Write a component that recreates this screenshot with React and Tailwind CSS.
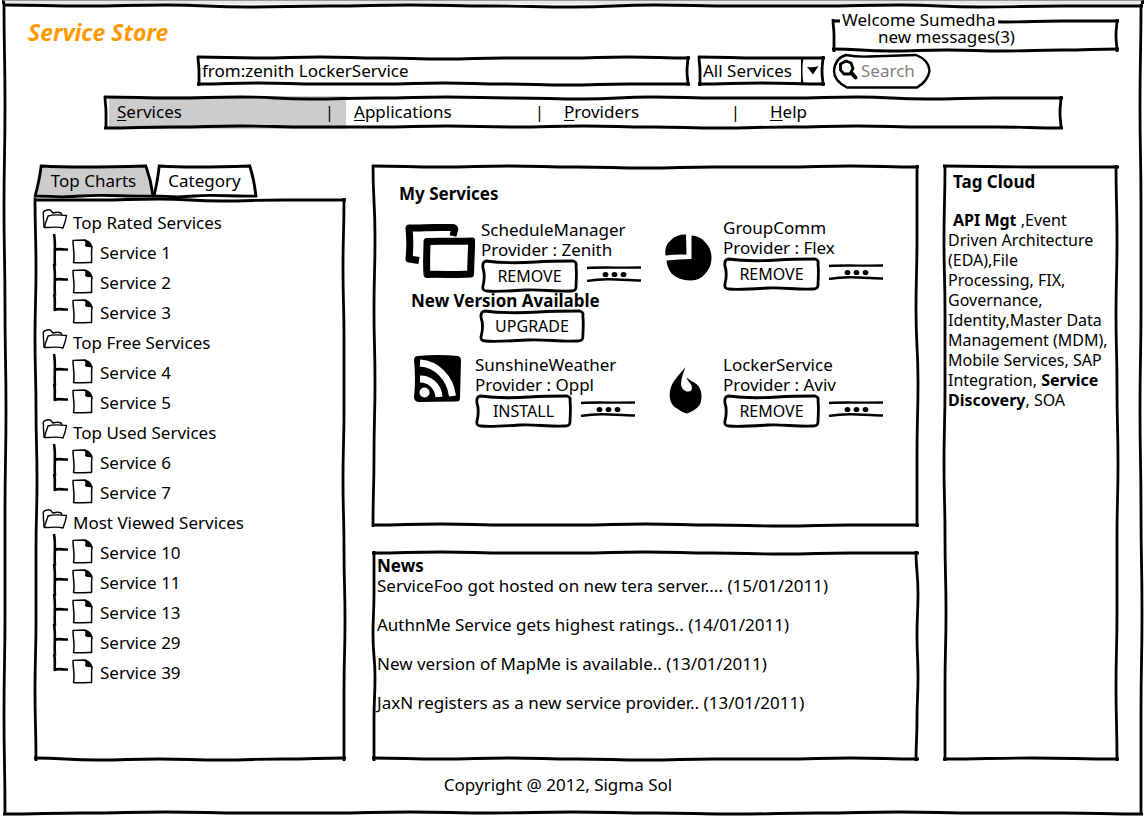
import React from 'react';

/* Offsets, in pixels, of a hand-drawn stroke from its straight line. */
const WAVES = {
  a: [0, 1, 0, 1, 2, 1, 1, 0, 1],
  b: [1, 0, 1, 1, 0, 1, 2, 1, 1],
  c: [0, 2, 1, 2, 1, 0],
  d: [1, 1, 0, 2, 1, 1],
  e: [0, 1, 1],
  f: [1, 0, 1],
  long1: [0, 1, 0, 2, 1, 0, 1, 2, 0, 1, 1, 0, 2, 1, 1],
  long2: [2, 1, 0, 1, 1, 0, 1, 0, 1, 2, 1, 0, 1, 1, 2],
};

function wavePath(wave, vertical) {
  const step = 100 / (wave.length - 1);
  const at = (along, off) => (vertical ? `${off + 1} ${along}` : `${along} ${off + 1}`);
  let d = `M${at(0, wave[0])}`;
  for (let i = 1; i < wave.length; i += 1) {
    const mid = (i - 0.5) * step;
    d += `C${at(mid, wave[i - 1])} ${at(mid, wave[i])} ${at(i * step, wave[i])}`;
  }
  return d;
}

function Edge({ wave, vertical, className }) {
  return (
    <svg
      aria-hidden="true"
      className={`pointer-events-none absolute overflow-visible ${className}`}
      viewBox={vertical ? '0 0 4 100' : '0 0 100 4'}
      preserveAspectRatio="none"
      fill="none"
      stroke="#000"
      strokeWidth="2.800"
    >
      <path d={wavePath(WAVES[wave], vertical)} vectorEffect="non-scaling-stroke" />
    </svg>
  );
}

function Sketch({ top = 'a', right = 'c', bottom = 'b', left = 'd' }) {
  return (
    <>
      <Edge wave={top} className="left-0 top-0 h-1 w-full" />
      <Edge wave={bottom} className="bottom-0 left-0 h-1 w-full" />
      <Edge wave={left} vertical className="left-0 top-0 h-full w-1" />
      <Edge wave={right} vertical className="right-0 top-0 h-full w-1" />
    </>
  );
}

function SketchButton({ children, className }) {
  return (
    <button type="button" className={`relative h-8 cursor-pointer text-base leading-none ${className}`}>
      <svg
        aria-hidden="true"
        className="absolute inset-0 h-full w-full overflow-visible"
        viewBox="0 0 98 32"
        preserveAspectRatio="none"
        fill="none"
        stroke="#000"
        strokeWidth="2.800"
        strokeLinejoin="round"
      >
        <path
          vectorEffect="non-scaling-stroke"
          d="M5 1C20 3 40 3 55 2S85 1 93 1Q97 2 96 6C97 14 96 21 96 27Q96 31 91 31C75 32 60 29 45 30S15 32 6 31Q1 31 2 26C4 18 4 14 2 8Q1 2 5 1Z"
        />
      </svg>
      <span className="relative">{children}</span>
    </button>
  );
}

function MoreButton() {
  return (
    <button type="button" aria-label="More" className="mt-1.5 h-4 w-14 shrink-0 cursor-pointer">
      <svg aria-hidden="true" viewBox="0 0 56 16" className="h-4 w-14" fill="none" stroke="#000" strokeWidth="2.400">
        <path d="M1 2C15 1 35 2 55 1.500M1 15C12 13 20 13 30 13.500S48 14 55 14.500" />
        <g fill="#000" stroke="none">
          <ellipse cx="19.500" cy="8.500" rx="2.900" ry="2.600" />
          <ellipse cx="28.500" cy="8.500" rx="2.900" ry="2.600" />
          <ellipse cx="37.500" cy="8.500" rx="2.900" ry="2.600" />
        </g>
      </svg>
    </button>
  );
}

function ScreensIcon() {
  return (
    <svg aria-hidden="true" viewBox="0 0 70 54" className="h-[54px] w-[70px]" fill="none" stroke="#000" strokeWidth="7" strokeLinejoin="round">
      <path d="M48 12L49.500 6Q50.500 3 46 3.600C32 3 18 4 4 4C5 14 5 26 4 35L14 36.500" />
      <path d="M22 17.500C36 16.500 52 18 67 17C66 28 66 40 65.500 50C50 51 36 50 22 50.500C21 40 22 28 22 17.500Z" />
    </svg>
  );
}

function FeedIcon() {
  return (
    <svg aria-hidden="true" viewBox="0 0 47 47" className="h-[47px] w-[47px]">
      <path d="M4 1Q24 -1 44 1Q47 2 47 5L46 43Q46 47 42 46.500L4 47Q0 46 0 42Q2 24 0 5Q0 1 4 1Z" />
      <path d="M6 8C22 9 36 22 38.500 41M6 24C15 24 24 30 25 42" fill="none" stroke="#fff" strokeWidth="7" />
      <circle cx="10.500" cy="37.500" r="5" fill="#fff" />
    </svg>
  );
}

function PieIcon() {
  return (
    <svg aria-hidden="true" viewBox="0 0 47 47" className="h-[47px] w-[47px]">
      <path d="M21 .5L21.500 20.500Q10 20 .5 21.500Q-1 12 6 6Q12 0 21 .5Z" />
      <path d="M26.500 1.500Q35 2 40 8Q47 15 46.500 25Q46 34 40 40Q34 47 25 46.500Q14 46 7 40Q2 34 1.500 26.500Q14 25 26.500 25Z" />
    </svg>
  );
}

function FlameIcon() {
  return (
    <svg aria-hidden="true" viewBox="0 0 33 47" className="h-[47px] w-[33px]">
      <path d="M16.500 0C12 6 5 12 2 20C-1 29 1 38 8 41.500C12 44 14 46 18 46.500C25 44 31 40 32 34C34 24 30 18 25 15.500C22 14 20 12 17.500 10.500C19 15 23 17 23 21C23 25 18 25.500 15 23C10 19 12 12 16.500 0Z" />
    </svg>
  );
}

function FolderIcon() {
  return (
    <svg aria-hidden="true" viewBox="0 0 26 20" className="h-5 w-[26px]" fill="none" stroke="#000" strokeWidth="1.400" strokeLinejoin="round">
      <path d="M2 18.500C2 13 1 9 1.500 6Q0 2 5 1Q9 0 10 3L11 4C14 3 17 3 19 4Q20 5 19.500 6" />
      <path d="M6 7C12 5 19 6 24.500 6.500C24 10 23 14 21 19C14 17 8 19 2.500 18.500C3 14 5 11 6 7Z" fill="#fff" />
    </svg>
  );
}

function FileIcon() {
  return (
    <svg aria-hidden="true" viewBox="0 0 21 25" className="h-[25px] w-[21px]" fill="none" stroke="#000" strokeWidth="1.500" strokeLinejoin="round">
      <path d="M1 1.500C5 1 9 1 13 1C16 2 19 5 20 8C19 13 20 18 19.500 23.500C13 23 7 24.500 1.500 23.500C3 16 1 9 1 1.500Z" />
      <path d="M12.500 1C16 2 18.500 5 19.500 8L13.500 7Q15 4 12.500 1Z" fill="#000" strokeWidth="1" />
    </svg>
  );
}

function Branch({ last }) {
  return (
    <svg aria-hidden="true" viewBox="0 0 16 30" className="h-[30px] w-4 overflow-visible" fill="none" stroke="#000" strokeWidth="2.600">
      <path d={last ? 'M0 -4C2 2 0 7 1 13' : 'M0 -4C2 6 0 18 1 28'} />
      <path d="M0 12C5 10 9 12 14 11.500" />
    </svg>
  );
}

const TREE = [
  ['Top Rated Services', ['Service 1', 'Service 2', 'Service 3']],
  ['Top Free Services', ['Service 4', 'Service 5']],
  ['Top Used Services', ['Service 6', 'Service 7']],
  ['Most Viewed Services', ['Service 10', 'Service 11', 'Service 13', 'Service 29', 'Service 39']],
];

function ServiceTree() {
  return (
    <ul className="pl-2 pt-2.5">
      {TREE.map(([group, items]) => (
        <li key={group}>
          <div className="flex h-[30px] items-center gap-[5px]">
            <span className="-mt-2"><FolderIcon /></span>
            {group}
          </div>
          <ul className="pl-3">
            {items.map((item, i) => (
              <li key={item} className="flex h-[30px] items-center">
                <Branch last={i === items.length - 1} />
                <span className="-mt-1 ml-0.5 mr-[7px]"><FileIcon /></span>
                {item}
              </li>
            ))}
          </ul>
        </li>
      ))}
    </ul>
  );
}

function Tab({ children, selected, className }) {
  return (
    <button type="button" role="tab" aria-selected={selected} className={`relative h-8 cursor-pointer ${className}`}>
      <svg aria-hidden="true" className="absolute inset-0 h-full w-full overflow-visible" viewBox="0 0 100 32" preserveAspectRatio="none" stroke="#000" strokeWidth="2.800" fill={selected ? '#ccc' : '#fff'}>
        <path vectorEffect="non-scaling-stroke" d="M1 31C3 22 5 12 6 1C35 3 65 2 94 1C97 11 99 21 100 31C80 32 60 29 40 31S15 31 1 31Z" />
      </svg>
      <span className="relative">{children}</span>
    </button>
  );
}

function Service({ icon, name, provider, action, className, iconClass }) {
  return (
    <article className={`flex items-start ${className}`}>
      <div className={`shrink-0 ${iconClass}`}>{icon}</div>
      <div>
        <h3 className="leading-5">{name}</h3>
        <p className="leading-5">Provider : {provider}</p>
        <div className="flex items-start gap-2">
          <SketchButton className="w-[97px]">{action}</SketchButton>
          <MoreButton />
        </div>
      </div>
    </article>
  );
}

const MENU = [
  ['S', 'ervices', 'w-[237px] pr-3 bg-[#ccc]'],
  ['A', 'pplications', 'w-[210px] pr-3'],
  ['P', 'roviders', 'w-[206px] pr-[22px]'],
  ['H', 'elp', 'flex-1'],
];

const NEWS = [
  'ServiceFoo got hosted on new tera server.... (15/01/2011)',
  'AuthnMe Service gets highest ratings.. (14/01/2011)',
  'New version of MapMe is available.. (13/01/2011)',
  'JaxN registers as a new service provider.. (13/01/2011)',
];

export default function App() {
  return (
    <div className="flex min-h-screen flex-col bg-white pb-0.5 font-['Noto_Sans','Open_Sans',sans-serif] text-[17px] text-black">
      <div className="mx-0.5 h-1 border-x-[3px] border-t border-x-black border-t-[#999] bg-[#ece8e3]" />
      <div className="relative mx-[3px] flex flex-1 flex-col">
        <Sketch top="long1" bottom="long2" left="a" right="b" />

        <header>
          <div className="flex items-start justify-between pl-[25px] pr-6 pt-1.5">
            <h1 className="pt-1.5 text-[23px] font-bold italic leading-8 text-[#ff9900]">Service Store</h1>
            <fieldset className="relative h-[42px] w-[287px]">
              <div className="absolute inset-x-0 -top-[11px] bottom-0">
                <Sketch top="d" bottom="c" left="e" right="f" />
              </div>
              <legend className="relative z-10 ml-2 bg-white px-0.5 leading-5">Welcome Sumedha</legend>
              <a href="#messages" className="relative block pl-[46px] leading-[14px]">new messages(3)</a>
            </fieldset>
          </div>

          <form className="flex h-9 items-center gap-2 pl-[194px] pr-[213px] pt-0.5" onSubmit={(e) => e.preventDefault()}>
            <div className="relative h-[30px] flex-1">
              <Sketch top="a" bottom="b" left="e" right="f" />
              <input aria-label="Search services" defaultValue="from:zenith LockerService" className="h-full w-full bg-transparent pb-0.5 pl-[5px] outline-none" />
            </div>
            <div className="relative h-[30px] w-[127px]">
              <Sketch top="e" bottom="f" left="e" right="f" />
              <select aria-label="Category" className="h-full w-full appearance-none bg-transparent pl-[5px] outline-none">
                <option>All Services</option>
              </select>
              <svg aria-hidden="true" viewBox="0 0 24 30" className="pointer-events-none absolute right-0 top-0 h-[30px] w-6">
                <path d="M1 2Q-1 14 1 28" fill="none" stroke="#000" strokeWidth="2.800" />
                <path d="M6 11Q12 12 17.500 10L12 18.500Z" />
              </svg>
            </div>
            <button type="submit" className="relative h-[34px] w-[97px] cursor-pointer pl-7 text-left text-[#808080]">
              <svg aria-hidden="true" viewBox="0 0 97 34" className="absolute inset-0 h-full w-full overflow-visible" fill="none" stroke="#000" strokeWidth="2.400">
                <path d="M13 1Q24 3 36 2.500T83 1Q96 6 96.500 17Q95 27 84 33.500L14 33.500Q1 27 1 17Q2 4 13 1Z" />
                <path d="M7.500 10L13 7L18 9L20 14.500L17 20L11 20L7.500 16Z" strokeWidth="2.800" strokeLinejoin="round" />
                <path d="M18.500 19L22.500 23.500" strokeWidth="4" strokeLinecap="round" />
              </svg>
              <span className="relative">Search</span>
            </button>
          </form>

          <nav className="relative ml-[101px] mr-20 mt-2 flex h-[33px] pl-[5px]">
            {MENU.map(([key, rest, className]) => (
              <div key={key} className={`flex items-center justify-between pb-0.5 pl-2 ${className}`}>
                <a href={`#${key}${rest}`}><u className="underline-offset-2">{key}</u>{rest}</a>
                {key !== 'H' && <span aria-hidden="true">|</span>}
              </div>
            ))}
            <Sketch top="long1" bottom="long2" left="e" right="f" />
          </nav>
        </header>

        <main className="flex flex-1 gap-6 pl-[31px] pr-6 pt-9">
          <aside className="mr-0.5 flex w-[312px] shrink-0 flex-col">
            <div role="tablist" className="flex">
              <Tab selected className="w-[119px]">Top Charts</Tab>
              <Tab className="w-[103px]">Category</Tab>
            </div>
            <div className="relative mt-px flex-1">
              <Sketch top="d" bottom="c" left="a" right="b" />
              <ServiceTree />
            </div>
          </aside>

          <div className="flex flex-1 flex-col gap-6">
            <section className="relative min-h-[362px] pt-[17px]">
              <Sketch top="a" bottom="b" left="c" right="d" />
              <h2 className="pl-[27px] font-bold leading-6">My Services</h2>
              <div className="grid grid-cols-[292px_1fr] pl-px pt-3">
                <div className="h-[134px] pl-8 pt-0.5">
                  <Service icon={<ScreensIcon />} name="ScheduleManager" provider="Zenith" action="REMOVE" iconClass="w-[76px] pt-1" className="" />
                  <p className="pl-1.5 font-bold leading-[18px]">New Version Available</p>
                  <SketchButton className="ml-[74px] w-[106px]">UPGRADE</SketchButton>
                </div>
                <Service icon={<PieIcon />} name="GroupComm" provider="Flex" action="REMOVE" iconClass="w-[58px] pt-4" className="" />
                <Service icon={<FeedIcon />} name="SunshineWeather" provider="Oppl" action="INSTALL" iconClass="w-[61px]" className="pl-[41px] pt-[3px]" />
                <Service icon={<FlameIcon />} name="LockerService" provider="Aviv" action="REMOVE" iconClass="w-[58px] pl-1 pt-3" className="pt-[3px]" />
              </div>
            </section>

            <section className="relative flex-1 pl-[5px] pt-[5px]">
              <Sketch top="b" bottom="a" left="d" right="c" />
              <h2 className="font-bold leading-5">News</h2>
              <ul>
                {NEWS.map((item) => (
                  <li key={item} className="h-[39px] leading-5">{item}</li>
                ))}
              </ul>
            </section>
          </div>

          <aside className="relative w-[176px] shrink-0 pl-[5px] pt-[7px]">
            <Sketch top="e" bottom="f" left="b" right="a" />
            <h2 className="pl-[5px] font-bold leading-5">Tag Cloud</h2>
            <p className="pt-[18px] text-base leading-5">
              <b className="pl-[5px]">API Mgt</b> ,Event<br />
              Driven Architecture<br />
              (EDA),File<br />
              Processing, FIX,<br />
              Governance,<br />
              Identity,Master Data<br />
              Management (MDM),<br />
              Mobile Services, SAP<br />
              Integration, <b>Service<br />Discovery</b>, SOA
            </p>
          </aside>
        </main>

        <footer className="flex h-[54px] items-center justify-center pb-1.5 pr-[30px]">Copyright @ 2012, Sigma Sol</footer>
      </div>
    </div>
  );
}
